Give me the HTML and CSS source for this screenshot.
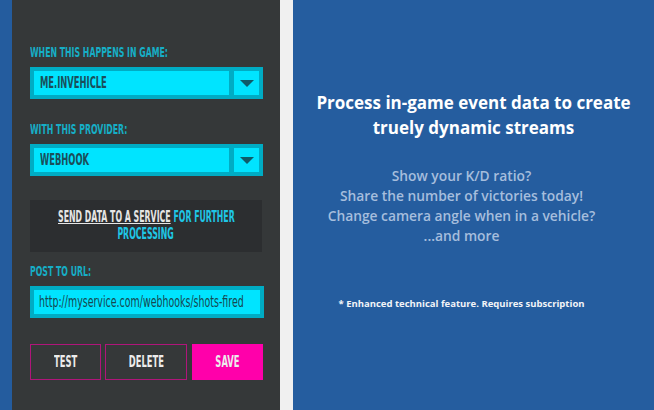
FILE: index.html
```html
<!DOCTYPE html>
<html>
<head>
<meta charset="utf-8">
<link rel="stylesheet" href="styles.css">
</head>
<body>
<div class="page">
  <div class="edge"></div>
  <div class="panel">
    <div class="label"><span class="cond">WHEN THIS HAPPENS IN GAME:</span></div>
    <div class="select">
      <div class="value"><span class="cond">ME.INVEHICLE</span></div>
      <div class="divider"></div>
      <div class="arrow"><span class="tri"></span></div>
    </div>
    <div class="label second"><span class="cond">WITH THIS PROVIDER:</span></div>
    <div class="select">
      <div class="value"><span class="cond">WEBHOOK</span></div>
      <div class="divider"></div>
      <div class="arrow"><span class="tri"></span></div>
    </div>
    <div class="info">
      <div class="info-line"><span class="cond-c"><span class="link">SEND DATA TO A SERVICE</span> <span class="hl">FOR FURTHER</span></span></div>
      <div class="info-line"><span class="cond-c"><span class="hl">PROCESSING</span></span></div>
    </div>
    <div class="label third"><span class="cond">POST TO URL:</span></div>
    <div class="input"><span class="cond url">http://myservice.com/webhooks/shots-fired</span></div>
    <div class="buttons">
      <div class="btn test"><span class="cond-c">TEST</span></div>
      <div class="btn delete"><span class="cond-c">DELETE</span></div>
      <div class="btn save"><span class="cond-c">SAVE</span></div>
    </div>
  </div>
  <div class="gap"></div>
  <div class="main">
    <h1 class="title">Process in-game event data to create<br>truely dynamic streams</h1>
    <p class="sub">Show your K/D ratio?<br>Share the number of victories today!<br>Change camera angle when in a vehicle?<br>...and more</p>
    <p class="note">* Enhanced technical feature. Requires subscription</p>
  </div>
</div>
</body>
</html>
```

FILE: styles.css
```css
html, body {
  margin: 0;
  padding: 0;
}
body {
  width: 654px;
  height: 410px;
  overflow: hidden;
  font-family: "DejaVu Sans Condensed", "DejaVu Sans", sans-serif;
}
.page {
  display: flex;
  width: 654px;
  height: 410px;
}
.edge {
  width: 12px;
  background: #245c9e;
}
.panel {
  width: 233px;
  background: #353839;
  padding: 44px 17px 0 18px;
}
.gap {
  width: 13px;
  background: #f0f0f0;
}
.main {
  flex: 1;
  background: #255d9f;
  text-align: center;
  font-family: "Open Sans", sans-serif;
  padding-top: 90px;
}
.cond {
  display: inline-block;
  white-space: nowrap;
  transform: scaleX(0.62);
  transform-origin: left center;
  font-weight: bold;
}
.cond-c {
  display: inline-block;
  white-space: nowrap;
  transform: scaleX(0.62);
  transform-origin: center center;
  font-weight: bold;
}
.label {
  color: #16aec6;
  font-size: 14px;
  line-height: 16px;
  height: 16px;
  margin-bottom: 7px;
}
.label.second {
  margin-top: 22px;
}
.label.third {
  margin-top: 11px;
}
.select {
  display: flex;
  height: 24px;
  border: 4px solid #00acc4;
  background: #00acc4;
}
.value {
  flex: 1;
  background: #00e4ff;
  color: #1a4f5a;
  font-size: 15px;
  line-height: 24px;
  padding-left: 6px;
}
.divider {
  width: 5px;
}
.arrow {
  width: 25px;
  background: #00e4ff;
  display: flex;
  align-items: center;
  justify-content: center;
}
.tri {
  width: 0;
  height: 0;
  border-left: 7px solid transparent;
  border-right: 7px solid transparent;
  border-top: 7px solid #0f5b69;
}
.info {
  margin-top: 24px;
  height: 52px;
  width: 232px;
  background: #2c2e30;
  display: flex;
  flex-direction: column;
  justify-content: center;
  align-items: center;
  font-size: 15px;
  line-height: 17px;
}
.info .cond-c {
  transform: scaleX(0.58);
}
.info-line {
  text-align: center;
}
.link {
  color: #e6e6e6;
  text-decoration: underline;
}
.hl {
  color: #1ec6e6;
}
.input {
  height: 24px;
  border: 4px solid #00acc4;
  background: #00e4ff;
  color: #17474f;
  font-size: 15px;
  line-height: 24px;
  padding-left: 5px;
  width: 221px;
}
.url {
  font-weight: normal;
  transform: scaleX(0.7);
}
.buttons {
  display: flex;
  margin-top: 26px;
  gap: 4px;
}
.btn {
  height: 34px;
  border: 1px solid #b0157a;
  color: #ececec;
  font-size: 15px;
  display: flex;
  align-items: center;
  justify-content: center;
}
.btn.test {
  width: 69px;
}
.btn.delete {
  width: 80px;
}
.btn.save {
  width: 69px;
  margin-left: 1px;
  background: #ff00aa;
  border-color: #ff00aa;
}
.title {
  margin: 0;
  color: #ffffff;
  font-size: 17px;
  line-height: 25px;
  font-weight: 700;
}
.sub {
  margin: 26px 0 0;
  padding-right: 24px;
  color: #a6bedd;
  font-size: 13.8px;
  line-height: 20px;
  font-weight: 600;
}
.note {
  margin: 51px 0 0;
  padding-right: 24px;
  color: #f2f4f8;
  font-size: 9.5px;
  line-height: 14px;
  font-weight: 700;
}
```
